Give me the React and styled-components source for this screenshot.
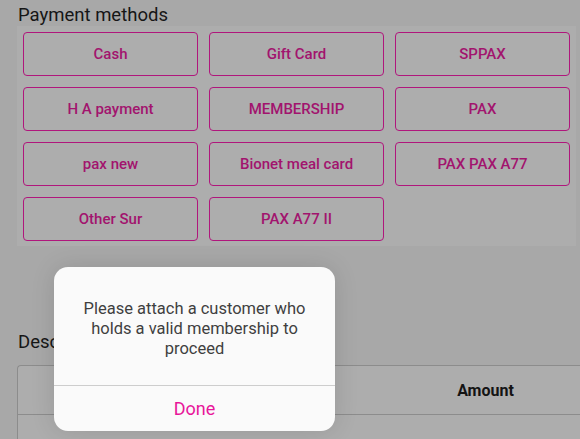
import React from "react";
import styled, { createGlobalStyle } from "styled-components";

const Global = createGlobalStyle`
  html, body { margin: 0; padding: 0; }
  body {
    width: 580px;
    height: 439px;
    overflow: hidden;
    background: #a8a8a8;
    font-family: Roboto, "Noto Sans", Arial, sans-serif;
  }
`;

const Page = styled.div`
  position: relative;
  width: 580px;
  height: 439px;
  overflow: hidden;
  background: #a8a8a8;
`;

const Content = styled.div`
  display: flex;
  flex-direction: column;
  padding: 4px 0 0 17px;
`;

const SectionTitle = styled.h2`
  margin: 0 0 0 1px;
  font-size: 18.5px;
  font-weight: 400;
  line-height: 22px;
  color: #161616;
`;

const MethodsPanel = styled.div`
  width: 547px;
  padding: 6px 6px 5px 6px;
  background: #adadad;
  display: grid;
  grid-template-columns: repeat(3, 1fr);
  column-gap: 11px;
  row-gap: 11px;
`;

const MethodButton = styled.button`
  height: 44px;
  box-sizing: border-box;
  border: 1.5px solid #b0167c;
  border-radius: 4px;
  background: transparent;
  color: #a2146e;
  font-family: Roboto, Arial, sans-serif;
  font-weight: 500;
  font-size: 15px;
  padding: 0;
`;

const DescTitle = styled(SectionTitle)`
  margin-top: 85px;
  margin-bottom: 12px;
`;

const Table = styled.div`
  width: 570px;
  border: 1px solid #8c8c8c;
  border-right: none;
  border-radius: 4px 0 0 0;
  background: #adadad;
`;

const HeaderRow = styled.div`
  display: grid;
  grid-template-columns: 1fr 205px;
  height: 48px;
  align-items: center;
  border-bottom: 1px solid #8c8c8c;
`;

const HeaderCell = styled.div`
  font-weight: 700;
  font-size: 16px;
  color: #141414;
  text-align: center;
`;

const BodyRow = styled.div`
  height: 40px;
`;

const Dialog = styled.div`
  position: absolute;
  left: 54px;
  top: 267px;
  width: 281px;
  height: 164px;
  background: #fafafa;
  border-radius: 14px;
  box-shadow: 0 0 24px rgba(0, 0, 0, 0.12);
  display: flex;
  flex-direction: column;
  overflow: hidden;
`;

const DialogMessage = styled.div`
  flex: 1;
  display: flex;
  align-items: center;
  justify-content: center;
  padding: 6px 22px 0;
  text-align: center;
  font-size: 16.5px;
  line-height: 20px;
  color: #3f3f3f;
`;

const DialogAction = styled.button`
  height: 46px;
  border: none;
  border-top: 1px solid #cdcdcd;
  background: transparent;
  color: #e8169a;
  font-family: Roboto, Arial, sans-serif;
  font-size: 18px;
  padding: 0;
`;

const methods = [
  "Cash",
  "Gift Card",
  "SPPAX",
  "H A payment",
  "MEMBERSHIP",
  "PAX",
  "pax new",
  "Bionet meal card",
  "PAX PAX A77",
  "Other Sur",
  "PAX A77 II",
];

export default function App() {
  return (
    <Page>
      <Global />
      <Content>
        <SectionTitle>Payment methods</SectionTitle>
        <MethodsPanel>
          {methods.map((m) => (
            <MethodButton key={m}>{m}</MethodButton>
          ))}
        </MethodsPanel>
        <DescTitle>Description</DescTitle>
        <Table>
          <HeaderRow>
            <HeaderCell />
            <HeaderCell>Amount</HeaderCell>
          </HeaderRow>
          <BodyRow />
        </Table>
      </Content>
      <Dialog>
        <DialogMessage>
          Please attach a customer who holds a valid membership to proceed
        </DialogMessage>
        <DialogAction>Done</DialogAction>
      </Dialog>
    </Page>
  );
}
